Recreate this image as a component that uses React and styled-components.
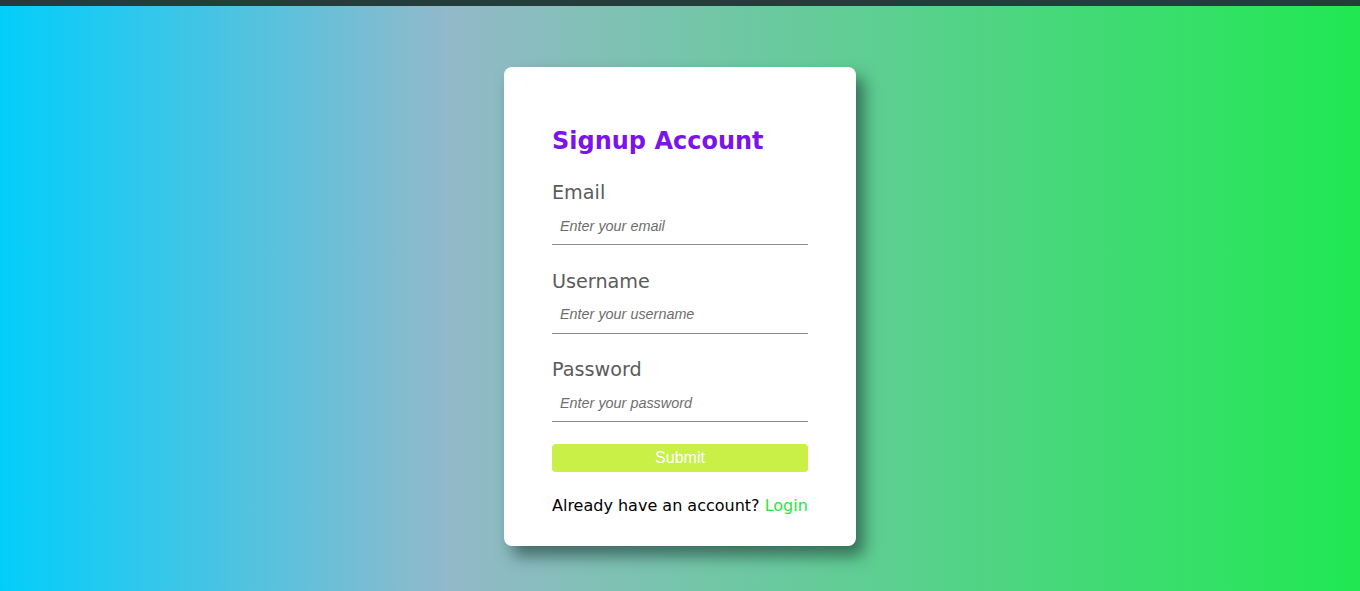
import React from "react";
import styled, { createGlobalStyle } from "styled-components";

const Global = createGlobalStyle`
  html, body { margin: 0; padding: 0; }
  body { font-family: "DejaVu Sans", Verdana, sans-serif; }
  * { box-sizing: border-box; }
`;

const TopBar = styled.div`
  height: 6px;
  background: #253d3a;
`;

const Page = styled.main`
  height: 585px;
  display: flex;
  justify-content: center;
  align-items: flex-start;
  padding-top: 61px;
  background: linear-gradient(to right, #02cefb 0%, #93b9c9 33.3%, #20e852 100%);
`;

const Card = styled.form`
  width: 352px;
  height: 479px;
  background: #fff;
  border-radius: 8px;
  padding: 58px 48px 0;
  box-shadow: 8px 10px 16px rgba(20, 50, 45, 0.6);
  display: flex;
  flex-direction: column;
`;

const Title = styled.h1`
  margin: 0;
  font-family: "DejaVu Sans", Verdana, sans-serif;
  font-size: 24px;
  font-weight: bold;
  color: #7b14ea;
  line-height: 32px;
`;

const Field = styled.div`
  display: flex;
  flex-direction: column;
  margin-top: ${(p) => p.$top}px;
`;

const Label = styled.label`
  font-size: 19.2px;
  color: #5b5b5b;
  line-height: 24px;
`;

const Input = styled.input`
  margin-top: 8px;
  width: 100%;
  height: 32px;
  border: none;
  border-bottom: 1px solid #8a8a8a;
  padding: 0 8px 6px;
  outline: none;
  font-family: "Liberation Sans", Arial, sans-serif;
  font-size: 14.4px;
  background: transparent;
  &::placeholder {
    color: #6e6e6e;
    font-style: italic;
  }
`;

const Submit = styled.button`
  margin-top: 22px;
  height: 28px;
  width: 100%;
  border: none;
  border-radius: 4px;
  background: #c8f046;
  color: #fff;
  font-family: "Liberation Sans", Arial, sans-serif;
  font-size: 16px;
  padding: 0;
`;

const Footer = styled.p`
  margin: 24px 0 0;
  font-size: 16px;
  color: #000;
  line-height: 20px;
`;

const LoginLink = styled.a`
  color: #1fe83c;
  text-decoration: none;
`;

export default function App() {
  return (
    <>
      <Global />
      <TopBar />
      <Page>
        <Card onSubmit={(e) => e.preventDefault()}>
          <Title>Signup Account</Title>
          <Field $top={24}>
            <Label>Email</Label>
            <Input type="email" placeholder="Enter your email" />
          </Field>
          <Field $top={24.5}>
            <Label>Username</Label>
            <Input type="text" placeholder="Enter your username" />
          </Field>
          <Field $top={24.5}>
            <Label>Password</Label>
            <Input type="password" placeholder="Enter your password" />
          </Field>
          <Submit type="submit">Submit</Submit>
          <Footer>
            Already have an account? <LoginLink href="#">Login</LoginLink>
          </Footer>
        </Card>
      </Page>
    </>
  );
}
